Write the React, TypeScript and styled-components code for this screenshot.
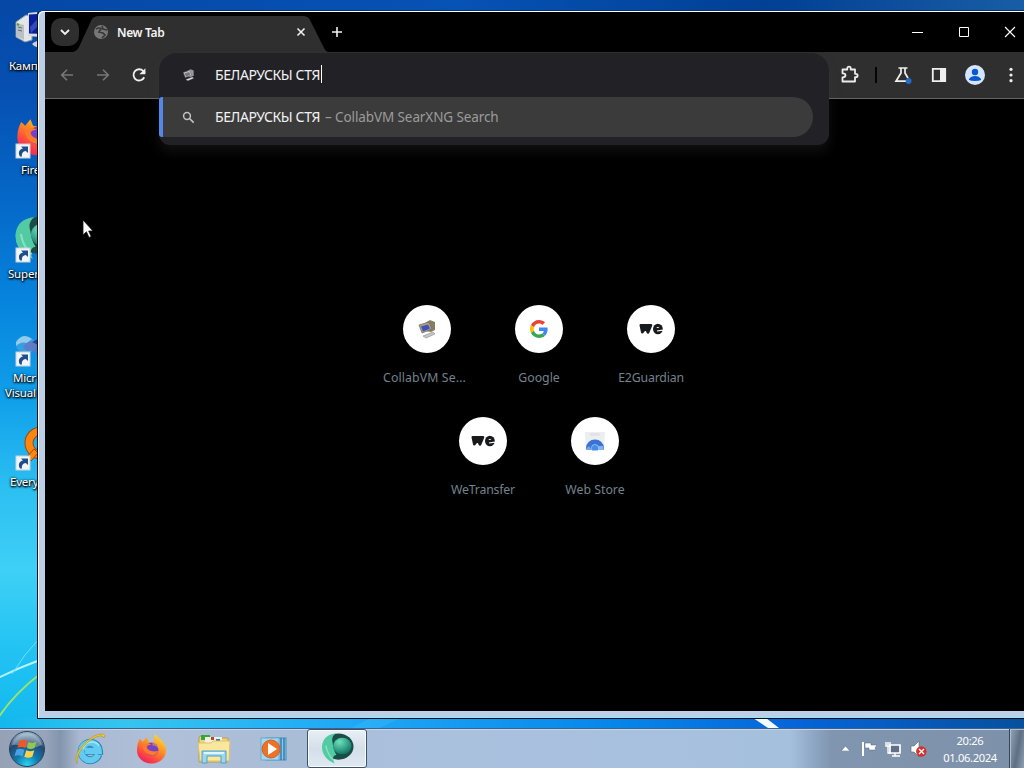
import React from "react";
import styled, { createGlobalStyle } from "styled-components";

const GlobalStyle = createGlobalStyle`
  * { box-sizing: border-box; }
  html, body { margin: 0; padding: 0; background: #000; }
  body { overflow: hidden; font-family: "Noto Sans", "Open Sans", sans-serif; }
  svg { display: block; flex: none; }
`;

const Screen = styled.div`
  position: relative;
  width: 1024px;
  height: 768px;
  overflow: hidden;
  display: flex;
  flex-direction: column;
  background: linear-gradient(180deg, #0548a6 0, #0650b2 90px, #0568c8 200px, #0684dd 300px, #10a0ea 400px, #2cc0f2 490px, #3fd0f6 570px, #22c3f3 650px, #12b8ee 728px);
`;

const Wallpaper = styled.svg`
  position: absolute;
  left: 0;
  top: 0;
`;

const DesktopIcons = styled.div`
  flex: 1;
  width: 37px;
  overflow: hidden;
  display: flex;
  flex-direction: column;
  padding-top: 9px;
`;

const Shortcut = styled.div`
  height: 104px;
  flex: none;
  position: relative;
`;

const ShortcutArt = styled.div`
  height: 49px;
  padding-left: 13px;
`;

const ShortcutLabel = styled.div<{ $left: number }>`
  padding-left: ${(p) => p.$left}px;
  white-space: pre;
  font: 11.5px/15px "Noto Sans", sans-serif;
  letter-spacing: -0.2px;
  color: #fff;
  text-shadow: 1px 1px 2px #000, 0 1px 2px #000, 0 0 3px rgba(0, 0, 0, 0.7);
`;

const WindowFrame = styled.div`
  position: absolute;
  left: 37px;
  top: 10px;
  width: 1004px;
  height: 709px;
  border: 1px solid #05101c;
  border-top-color: #06336f;
  border-radius: 6px 0 0 0;
  background: #bccfe6;
  box-shadow: inset 1px 1px 0 #fff, inset 0 -1px 0 #8ee6f8;
  padding: 1px 7px 7px 7px;
`;

const Browser = styled.div`
  width: 988px;
  height: 699px;
  background: #000;
  display: flex;
  flex-direction: column;
`;

const TabStrip = styled.div`
  height: 40px;
  flex: none;
  display: flex;
  align-items: center;
  position: relative;
  padding-left: 6px;
  padding-right: 14px;
`;

const TabSearch = styled.div`
  width: 28px;
  height: 28px;
  border-radius: 10px;
  background: #2e2e2e;
  display: flex;
  align-items: center;
  justify-content: center;
`;

const Tab = styled.div`
  width: 255px;
  height: 36px;
  margin: 4px 0 0 -6px;
  clip-path: path("M0 36 Q4 35 6 31 L18 5 Q20 0 26 0 L230 0 Q235 0 237 4 L251 32 Q253 36 255 36 Z");
  background: #2f2f2f;
  display: flex;
  align-items: center;
  padding: 0 22px 4px 20px;
`;

const TabTitle = styled.span`
  flex: 1;
  padding-left: 8px;
  color: #f4f4f4;
  font: 600 12px/18px "Noto Sans", sans-serif;
  letter-spacing: -0.35px;
  margin-top: 1px;
`;

const NewTabButton = styled.div`
  display: flex;
  margin-left: 2px;
`;

const Caption = styled.div`
  display: flex;
  gap: 34px;
  margin-left: auto;
  padding-right: 3px;
  margin-top: -1px;
`;

const Toolbar = styled.div`
  height: 47px;
  flex: none;
  display: flex;
  align-items: center;
  position: relative;
  background: #2f2f2f;
  border-bottom: 1px solid #666;
  padding-left: 13px;
  gap: 18px;
`;

const NavButtons = styled.div`
  display: flex;
  gap: 18px;
  width: 90px;
`;

const Actions = styled.div`
  display: flex;
  align-items: center;
  margin-left: auto;
  padding-right: 4px;
`;

const Slot = styled.div<{ $w: number }>`
  width: ${(p) => p.$w}px;
  display: flex;
  align-items: center;
  justify-content: center;
`;

const Divider = styled.div`
  width: 2px;
  height: 16px;
  margin-right: 2px;
  background: #050505;
`;

const Omnibox = styled.div`
  position: absolute;
  left: 114px;
  top: 1px;
  width: 670px;
  height: 92px;
  border-radius: 18px 18px 11px 11px;
  background: #212126;
  box-shadow: 0 7px 12px rgba(70, 70, 70, 0.23);
`;

const OmniRow = styled.div<{ $active?: boolean }>`
  height: ${(p) => (p.$active ? 40 : 44)}px;
  width: ${(p) => (p.$active ? 654 : 670)}px;
  display: flex;
  align-items: center;
  padding-left: ${(p) => (p.$active ? 19 : 23)}px;
  border-left: ${(p) => (p.$active ? "4px solid #5488e8" : "none")};
  background: ${(p) => (p.$active ? "#3b3b3b" : "transparent")};
  border-radius: ${(p) => (p.$active ? "3px 20px 20px 3px" : "0")};
`;

const Query = styled.span`
  margin-left: 20px;
  width: 106px;
  font: 14px/20px "Noto Sans", sans-serif;
  letter-spacing: -0.4px;
  color: #f2f2f2;
  white-space: pre;
`;

const Caret = styled.span`
  width: 1px;
  height: 18px;
  margin-bottom: 3px;
  background: #fff;
`;

const Provider = styled.span`
  margin-left: 4px;
  font: 13.5px/20px "Noto Sans", sans-serif;
  letter-spacing: -0.1px;
  color: #9b9b9b;
  white-space: pre;
`;

const Page = styled.div`
  flex: 1;
  display: flex;
  justify-content: center;
  padding-top: 190px;
`;

const Tiles = styled.div`
  width: 336px;
  display: flex;
  flex-wrap: wrap;
  justify-content: center;
  align-content: flex-start;
`;

const Tile = styled.div`
  width: 112px;
  height: 112px;
  padding-top: 16px;
  display: flex;
  flex-direction: column;
  align-items: center;
`;

const Disc = styled.div`
  width: 48px;
  height: 48px;
  border-radius: 50%;
  background: #fff;
  display: flex;
  align-items: center;
  justify-content: center;
`;

const TileLabel = styled.span<{ $ls: number; $inset?: number }>`
  margin-top: 15px;
  padding-right: ${(p) => p.$inset || 0}px;
  font: 12.3px/20px "Noto Sans", sans-serif;
  letter-spacing: ${(p) => p.$ls}px;
  color: #74828d;
  white-space: nowrap;
`;

const Cursor = styled.svg`
  position: absolute;
  left: 82px;
  top: 219px;
`;

const Taskbar = styled.div`
  position: relative;
  height: 40px;
  flex: none;
  display: flex;
  align-items: center;
  background: linear-gradient(90deg, #96a1b6 0, #97a5bb 45px, #8395ad 60px, #a9b9d1 80px, #b0c0d8 160px, #a9bdd7 300px, #aac1de 450px, #a5c0dd 790px, #8fa8c6 812px, #8095af 832px, #7e91aa 1024px);
  border-top: 1px solid #3a648f;
  box-shadow: inset 0 1px 0 #c3d6ea;
`;

const TaskSlot = styled.div<{ $w: number; $active?: boolean }>`
  width: ${(p) => p.$w}px;
  height: 39px;
  display: flex;
  align-items: center;
  justify-content: center;
  border: ${(p) => (p.$active ? "1px solid #3e526c" : "none")};
  border-radius: 3px;
  background: ${(p) => (p.$active ? "linear-gradient(180deg,#e9f0f6 0,#d3dfe9 50%,#dfe9f1 100%)" : "none")};
  box-shadow: ${(p) => (p.$active ? "inset 0 0 0 1px #f8fbfd" : "none")};
`;

const Tray = styled.div`
  margin-left: auto;
  display: flex;
  align-items: center;
  height: 39px;
`;

const Clock = styled.div`
  width: 78px;
  text-align: center;
  color: #fff;
  font: 11.2px/17px "Noto Sans", sans-serif;
  letter-spacing: -0.35px;
`;

const ShowDesktop = styled.div`
  width: 15px;
  height: 39px;
  border-left: 1px solid #35465b;
  background: linear-gradient(100deg, #98a6b5, #5d6f83 55%, #91a0b1);
  box-shadow: inset 1px 1px 0 #aebccb;
`;

const ShortcutArrow = () => (
  <g transform="translate(3 31)">
    <rect width="14" height="14" fill="#f3f6f8" stroke="#c7d2db" strokeWidth="1" />
    <path d="M4 12.5c-2.5-4-.5-7.5 3-8L5 2.5h7V9L9.8 7C7 7.5 5.5 9 6 12.5z" fill="#1e4f8c" />
  </g>
);

const ComputerArt = () => (
  <svg width="48" height="46" viewBox="0 0 48 46">
    <path d="M3 13l10-7 6 1v24l-7 2-9-5z" fill="#e3e6e4" stroke="#8e979d" />
    <path d="M3 14l8 2v15l-8-4z" fill="#b9c1c5" />
    <path d="M5 18l4 1M5 21l4 1" stroke="#626d73" />
    <path d="M4 15l2 1" stroke="#4ba32e" strokeWidth="2" />
    <path d="M15 4l28-3v28l-28-2z" fill="#d6dce3" />
    <path d="M16 5.500l27-2v22l-27-1z" fill="#0b1f9c" />
    <path d="M17 18L29 5h8L18 24z" fill="#5779db" opacity=".5" />
    <path d="M19 35q5-5 12-3v6q-8 2-12-3z" fill="#cbd5d8" />
  </svg>
);

const FoxLogo = ({ size }: { size: number }) => (
  <svg width={size} height={size} viewBox="0 0 32 32">
    <defs>
      <linearGradient id="fx" x1=".8" y1="0" x2=".2" y2="1">
        <stop offset="0" stopColor="#ffe53c" />
        <stop offset=".4" stopColor="#ff9323" />
        <stop offset=".8" stopColor="#fb3b48" />
        <stop offset="1" stopColor="#e41b68" />
      </linearGradient>
    </defs>
    <path d="M4 6l3 3 4-5 2 5 6 1q-2-5 1-9 2 4 6 6 5 5 5 11A15 13.5 0 0 1 1 18Q1 11 4 6z" fill="url(#fx)" />
    <circle cx="16.5" cy="16.5" r="6.8" fill="#7641c8" />
    <path d="M7 13q4-4 9-1-4 0-5 2.500 2 6 12 4-4 7-11 3-5-3-5-8.500z" fill="#ff7b28" />
    <path d="M17 9q8 1 7 9-2-5-7-5z" fill="#ffb52d" opacity=".5" />
  </svg>
);

const SupermiumLogo = ({ size }: { size: number }) => (
  <svg width={size} height={size} viewBox="0 0 34 34">
    <defs>
      <radialGradient id="sm" cx=".35" cy=".25" r=".75">
        <stop offset="0" stopColor="#6de2bd" />
        <stop offset="1" stopColor="#137866" />
      </radialGradient>
    </defs>
    <ellipse cx="18" cy="15" rx="15.5" ry="13.5" fill="#1b4d48" />
    <path d="M1 15Q2 3 15 1.500q-5 4-3 10 1 8 4 12-6 1-2 9Q1 27 1 15z" fill="#52cba2" />
    <ellipse cx="22" cy="14.5" rx="9.5" ry="8.5" fill="url(#sm)" />
    <path d="M5 14q2 10 8 15" fill="none" stroke="#8be0c3" strokeWidth="1.5" />
  </svg>
);

const VisualArt = () => (
  <svg width="48" height="46" viewBox="0 0 48 46">
    <ellipse cx="13" cy="24" rx="10" ry="8" fill="#4ba4e1" opacity=".7" />
    <path d="M3 21q7-10 16-3l-5 4q-6-2-11 3z" fill="#92caea" />
    <path d="M10 26q7-10 13-2l5-8v18q-5 1-9-5-4 3-9-3z" fill="#6871bd" opacity=".75" />
    <path d="M19 21l8-4v8z" fill="#3d3b96" />
    <ShortcutArrow />
  </svg>
);

const EverythingArt = () => (
  <svg width="48" height="46" viewBox="0 0 48 46">
    <circle cx="28" cy="18" r="12" fill="none" stroke="#954c14" strokeWidth="9" />
    <circle cx="28" cy="18" r="12" fill="none" stroke="#ff860e" strokeWidth="7" />
    <path d="M21 24l-8 9 5 3 7-8z" fill="#ff860e" stroke="#954c14" />
    <ShortcutArrow />
  </svg>
);

const RetroMonitor = ({ mono }: { mono?: boolean }) => (
  <svg width={mono ? 13 : 20} height={mono ? 14 : 20} viewBox="0 0 20 20">
    <path d="M8 4l5-3 5 2v8l-4 2-6-1z" fill={mono ? "#999" : "#877d63"} />
    <path d="M2 6l10-3 3 7-10 4z" fill={mono ? "#c3c3c3" : "#aaa27f"} stroke="#666" strokeWidth=".7" />
    <path d="M4 7.5l7-2 2 4-7 3z" fill={mono ? "#777" : "#4250bd"} />
    <path d="M6 17l10-4 2 2-9 4z" fill={mono ? "#ddd" : "#c5c7c9"} stroke="#777" strokeWidth=".5" />
  </svg>
);

const GoogleG = () => (
  <svg width="18" height="18" viewBox="0 0 48 48">
    <path fill="#EA4335" d="M24 9.5c3.54 0 6.71 1.22 9.21 3.6l6.85-6.85C35.9 2.38 30.47 0 24 0 14.62 0 6.51 5.38 2.56 13.22l7.98 6.19C12.43 13.72 17.74 9.5 24 9.5z" />
    <path fill="#4285F4" d="M46.98 24.55c0-1.57-.15-3.09-.38-4.55H24v9.02h12.94c-.58 2.96-2.26 5.48-4.78 7.18l7.73 6c4.51-4.18 7.09-10.36 7.09-17.65z" />
    <path fill="#FBBC05" d="M10.53 28.59A14.5 14.5 0 0 1 9.77 24c0-1.6.27-3.14.76-4.59l-7.98-6.19A24 24 0 0 0 0 24c0 3.88.92 7.54 2.56 10.78l7.97-6.19z" />
    <path fill="#34A853" d="M24 48c6.48 0 11.93-2.13 15.89-5.81l-7.73-6c-2.15 1.45-4.92 2.3-8.16 2.3-6.26 0-11.57-4.22-13.47-9.91l-7.98 6.19C6.51 42.62 14.62 48 24 48z" />
  </svg>
);

const WeMark = () => (
  <svg width="24" height="12" viewBox="0 0 24 12">
    <path d="M1.8 2.2l1.5 7L6.8 5l2.200 4.400L12 2.200z" fill="#191a1c" stroke="#191a1c" strokeWidth="2.6" strokeLinejoin="round" />
    <ellipse cx="18.900" cy="6" rx="4.900" ry="5.300" fill="#191a1c" />
    <path d="M17.400 5q1.300-2.200 3 0z" fill="#fff" />
    <path d="M18 8l6.500-1" stroke="#fff" strokeWidth="1.200" />
  </svg>
);

const StoreIcon = () => (
  <svg width="20" height="20" viewBox="0 0 20 20">
    <path d="M0 1h20l-1 17H1z" fill="#eceef0" />
    <path d="M6 3.5h8" stroke="#dfe1e4" strokeWidth="2.5" strokeLinecap="round" />
    <path d="M1 19v-2a9 8.5 0 0 1 18 0v2z" fill="#3c72d3" />
    <path d="M1 19v-1l3-3 3 4z" fill="#7aa5e9" />
    <path d="M12 15h6l1 4h-6z" fill="#82b2f2" />
    <circle cx="10" cy="17" r="3.7" fill="#a9c8f5" />
    <path d="M7 19v-2a3 3 0 0 1 6 0v2z" fill="#448aef" />
  </svg>
);

const StartOrb = () => (
  <svg width="38" height="38" viewBox="0 0 38 38">
    <defs>
      <radialGradient id="orb" cx=".5" cy=".95" r=".95">
        <stop offset="0" stopColor="#28d6f4" />
        <stop offset=".35" stopColor="#1278ae" />
        <stop offset=".7" stopColor="#24496d" />
        <stop offset="1" stopColor="#a9c4d6" />
      </radialGradient>
    </defs>
    <circle cx="19" cy="19" r="17.5" fill="url(#orb)" stroke="#28435f" />
    <path d="M4 15A15.5 15.5 0 0 1 34 15Q25 19 19 17 11 14 4 15z" fill="#fff" opacity=".3" />
    <path d="M11.5 11q4-2 8 .5L17.5 18q-4-2-8-.4z" fill="#ef5727" />
    <path d="M20.5 12q4 2 8-.2L26.5 18q-4 2-7.5 0z" fill="#91c94b" />
    <path d="M8.5 19.5q4-1.5 8 .5l-2 6.5q-4-2-8-.5z" fill="#4aa1df" />
    <path d="M18.3 20.3q4 2 8 0l-2 6.5q-4 2-8 0z" fill="#ffd14b" />
  </svg>
);

const IELogo = () => (
  <svg width="34" height="34" viewBox="0 0 34 34">
    <path d="M25.500 22.500A8.700 8.700 0 1 1 26 18.800H12" fill="none" stroke="#2387b9" strokeWidth="7.800" />
    <path d="M25.200 22.500A8.700 8.700 0 1 1 25.700 18.800H12" fill="none" stroke="#63cbef" strokeWidth="6.200" />
    <path d="M10 17q2-7 9-7 5 0 7 4" fill="none" stroke="#b4ecfb" strokeWidth="1.500" opacity=".8" />
    <path d="M4 31.500Q0 25 9 14 21 1 30 2q3 1 1 4-1-3-5-2-8 2-16 11-7 9-6 16.500z" fill="#f7cb31" stroke="#b98e1a" strokeWidth=".6" />
  </svg>
);

const ExplorerIcon = () => (
  <svg width="36" height="32" viewBox="0 0 36 32">
    <path d="M3 5q0-2 2-2h8l2 2h17v24H3z" fill="#efd580" stroke="#b79c50" />
    <path d="M5 2h9v5H5z" fill="#33a642" />
    <path d="M9 4h17v7H9z" fill="#f6f1df" />
    <path d="M15 4h3v3h-3z" fill="#c6422f" />
    <path d="M20 6h4v3h-4z" fill="#347eb9" />
    <path d="M2 10h13l2-2h17l-1 20H4z" fill="#fbe79c" stroke="#dbc170" />
    <path d="M6 30V18h24v12h-5v-7H11v7z" fill="#9cd7f0" stroke="#4f9fc9" />
    <path d="M8 20h20" stroke="#dff6ff" strokeWidth="2" />
  </svg>
);

const MediaPlayerIcon = () => (
  <svg width="30" height="28" viewBox="0 0 30 28">
    <rect x="7" y="3" width="20" height="22" fill="#8fc7e9" stroke="#428ebc" />
    <path d="M22 3v22M25 3v22" stroke="#367fae" strokeWidth="1.5" />
    <rect x="2" y="3" width="18" height="22" fill="#a7d7f0" stroke="#69abd0" />
    <circle cx="12" cy="14" r="9" fill="#ee7126" stroke="#c6642e" />
    <path d="M9 8v12l9-6z" fill="#fff" />
  </svg>
);

const tiles = [
  { name: "CollabVM Se...", art: <RetroMonitor />, ls: 0.12, inset: 5 },
  { name: "Google", art: <GoogleG />, ls: 0 },
  { name: "E2Guardian", art: <WeMark />, ls: -0.17 },
  { name: "WeTransfer", art: <WeMark />, ls: -0.2 },
  { name: "Web Store", art: <StoreIcon />, ls: 0 },
];

const Shortcuts = () => (
  <DesktopIcons>
    <Shortcut>
      <ShortcutArt><ComputerArt /></ShortcutArt>
      <ShortcutLabel $left={9}>Камп</ShortcutLabel>
    </Shortcut>
    <Shortcut>
      <ShortcutArt>
        <svg width="48" height="46" viewBox="0 0 48 46"><g transform="translate(3 1)"><FoxLogo size={42} /></g><ShortcutArrow /></svg>
      </ShortcutArt>
      <ShortcutLabel $left={21}>Fire</ShortcutLabel>
    </Shortcut>
    <Shortcut>
      <ShortcutArt>
        <svg width="48" height="46" viewBox="0 0 48 46"><g transform="translate(1 -2)"><SupermiumLogo size={46} /></g><ShortcutArrow /></svg>
      </ShortcutArt>
      <ShortcutLabel $left={8}>Super</ShortcutLabel>
    </Shortcut>
    <Shortcut>
      <ShortcutArt><VisualArt /></ShortcutArt>
      <ShortcutLabel $left={13}>Micr</ShortcutLabel>
      <ShortcutLabel $left={5}>Visual</ShortcutLabel>
    </Shortcut>
    <Shortcut>
      <ShortcutArt><EverythingArt /></ShortcutArt>
      <ShortcutLabel $left={10}>Every</ShortcutLabel>
    </Shortcut>
  </DesktopIcons>
);

const BrowserTabs = () => (
  <TabStrip>
    <TabSearch>
      <svg width="12" height="12" viewBox="0 0 12 12"><path d="M2 4l4 4 4-4" fill="none" stroke="#f2f2f2" strokeWidth="1.8" /></svg>
    </TabSearch>
    <Tab>
      <svg width="16" height="16" viewBox="0 0 16 16">
        <circle cx="8" cy="8" r="7" fill="#777" />
        <path d="M3 5q4-2 5 0l-2 3 4 1 2 2-3 3M9 2l1 3 4 1" fill="none" stroke="#383838" strokeWidth="1.7" />
      </svg>
      <TabTitle>New Tab</TabTitle>
      <svg width="10" height="10" viewBox="0 0 10 10"><path d="M1.5 1.5l7 7m0-7l-7 7" stroke="#eee" strokeWidth="1.6" /></svg>
    </Tab>
    <NewTabButton>
      <svg width="14" height="14" viewBox="0 0 14 14"><path d="M7 2v10M2 7h10" stroke="#eee" strokeWidth="1.6" /></svg>
    </NewTabButton>
    <Caption>
      <svg width="12" height="12" viewBox="0 0 12 12"><path d="M0 6.5h11" stroke="#fff" /></svg>
      <svg width="12" height="12" viewBox="0 0 12 12"><path d="M1.5 1.5h9v9h-9z" fill="none" stroke="#fff" /></svg>
      <svg width="12" height="12" viewBox="0 0 12 12"><path d="M1 1l10 10m0-10L1 11" stroke="#fff" strokeWidth="1.1" /></svg>
    </Caption>
  </TabStrip>
);

const BrowserToolbar = () => (
  <Toolbar>
    <NavButtons>
      <svg width="18" height="18" viewBox="0 0 24 24"><path d="M20 12H5m7-7l-7 7 7 7" fill="none" stroke="#777" strokeWidth="2.2" /></svg>
      <svg width="18" height="18" viewBox="0 0 24 24"><path d="M4 12h15m-7-7l7 7-7 7" fill="none" stroke="#777" strokeWidth="2.2" /></svg>
      <svg width="18" height="18" viewBox="0 0 24 24"><path d="M19 15A7.5 7.5 0 1 1 17.5 6.5L20 9" fill="none" stroke="#efefef" strokeWidth="2.4" /><path d="M20.5 3v8h-8z" fill="#efefef" /></svg>
    </NavButtons>
    <Actions>
      <Slot $w={36}>
        <svg width="20" height="20" viewBox="0 0 20 20"><path d="M2.5 4.5h4.8V3.3a1.7 1.7 0 0 1 3.4 0v1.2H15v4.3h.9a1.7 1.7 0 0 1 0 3.4H15v4.3H2.5v-4.2q3 0 3-2t-3-2z" fill="none" stroke="#ededed" strokeWidth="1.8" strokeLinejoin="round" /></svg>
      </Slot>
      <Slot $w={17}><Divider /></Slot>
      <Slot $w={36}>
        <svg width="20" height="20" viewBox="0 0 20 20"><path d="M5.5 3h9M8 3v5L3 16.2h11M12 3v5l3 5" fill="none" stroke="#efefef" strokeWidth="1.7" /><circle cx="15.6" cy="16" r="2.9" fill="#246bce" /></svg>
      </Slot>
      <Slot $w={36}>
        <svg width="16" height="16" viewBox="0 0 16 16"><path d="M1.8 1.8h12.4v12.4H1.8z" fill="none" stroke="#efefef" strokeWidth="1.8" /><path d="M9 2h5v12H9z" fill="#efefef" /></svg>
      </Slot>
      <Slot $w={36}>
        <svg width="20" height="20" viewBox="0 0 20 20"><circle cx="10" cy="10" r="10" fill="#d5e5fd" /><circle cx="10" cy="7" r="3.2" fill="#0b57d0" /><path d="M4 15v-1q2-3 6-3t6 3v1q-2 1-6 1t-6-1z" fill="#0b57d0" /></svg>
      </Slot>
      <Slot $w={36}>
        <svg width="4" height="16" viewBox="0 0 4 16"><circle cx="2" cy="2.3" r="1.6" fill="#eee" /><circle cx="2" cy="8" r="1.6" fill="#eee" /><circle cx="2" cy="13.7" r="1.6" fill="#eee" /></svg>
      </Slot>
    </Actions>
    <Omnibox>
      <OmniRow>
        <RetroMonitor mono />
        <Query>БЕЛАРУСКЫ СТЯ</Query>
        <Caret />
      </OmniRow>
      <OmniRow $active>
        <svg width="13" height="13" viewBox="0 0 13 13"><circle cx="5" cy="5" r="3.4" fill="none" stroke="#c2c2c2" strokeWidth="1.5" /><path d="M7.5 7.5l4.2 4.2" stroke="#c2c2c2" strokeWidth="1.7" /></svg>
        <Query>БЕЛАРУСКЫ СТЯ</Query>
        <Provider>– CollabVM SearXNG Search</Provider>
      </OmniRow>
    </Omnibox>
  </Toolbar>
);

const DesktopTaskbar = () => (
  <Taskbar>
    <TaskSlot $w={54}><StartOrb /></TaskSlot>
    <TaskSlot $w={71}><IELogo /></TaskSlot>
    <TaskSlot $w={52}><FoxLogo size={31} /></TaskSlot>
    <TaskSlot $w={73}><ExplorerIcon /></TaskSlot>
    <TaskSlot $w={47}><MediaPlayerIcon /></TaskSlot>
    <TaskSlot $w={10} />
    <TaskSlot $w={60} $active><SupermiumLogo size={33} /></TaskSlot>
    <Tray>
      <Slot $w={24}><svg width="9" height="5" viewBox="0 0 9 5"><path d="M0 5l4.5-5L9 5z" fill="#fff" stroke="#53647a" strokeWidth=".5" /></svg></Slot>
      <Slot $w={24}><svg width="18" height="18" viewBox="0 0 18 18"><path d="M3 2v14" stroke="#fff" strokeWidth="2" /><path d="M5 3h6v2h6l-2 3 1 2H9V8H5z" fill="#fff" stroke="#52647c" strokeWidth=".5" /></svg></Slot>
      <Slot $w={24}><svg width="18" height="18" viewBox="0 0 18 18"><path d="M6 5h10v8H6z" fill="#607187" stroke="#fff" strokeWidth="1.7" /><path d="M8 16h8M11 13v3M2 2v4h4V2M4 6v7h3M4 2v3" fill="none" stroke="#fff" strokeWidth="1.4" /></svg></Slot>
      <Slot $w={26}><svg width="19" height="18" viewBox="0 0 19 18"><path d="M2 6h3l5-5v16l-5-5H2z" fill="#fff" stroke="#536378" strokeWidth=".6" /><circle cx="12.3" cy="11.5" r="5.2" fill="#d5302c" /><path d="M10 9l5 5m0-5l-5 5" stroke="#fff" strokeWidth="1.4" /></svg></Slot>
      <Clock>
        <div>20:26</div>
        <div>01.06.2024</div>
      </Clock>
      <ShowDesktop />
    </Tray>
  </Taskbar>
);

export default function App() {
  return (
    <>
      <GlobalStyle />
      <Screen>
        <Wallpaper width="1024" height="728" viewBox="0 0 1024 728">
          <defs>
            <linearGradient id="topEdge"><stop offset="0" stopColor="#0548a6" /><stop offset=".45" stopColor="#0752b5" /><stop offset=".75" stopColor="#004095" /><stop offset="1" stopColor="#195da5" /></linearGradient>
            <linearGradient id="bottomEdge"><stop offset="0" stopColor="#12b8ee" /><stop offset=".12" stopColor="#36c4ef" /><stop offset=".33" stopColor="#20aaf6" /><stop offset=".6" stopColor="#0786ea" /><stop offset=".78" stopColor="#0664d8" /><stop offset="1" stopColor="#07509e" /></linearGradient>
          </defs>
          <rect width="1024" height="13" fill="url(#topEdge)" />
          <rect y="717" width="1024" height="11" fill="url(#bottomEdge)" />
          <path d="M-2 678Q18 668 40 660" fill="none" stroke="#b6f2ff" strokeWidth="2" />
          <path d="M12 674Q24 654 40 638" fill="none" stroke="#72ddfa" />
          <path d="M-2 718Q14 694 40 674" fill="none" stroke="#9ce46b" strokeWidth="1.8" />
          <path d="M753 718h13l13 10h-11z" fill="#f4fbff" />
          <path d="M351 728l20-10h30l-22 10z" fill="#77ddff" opacity=".15" />
        </Wallpaper>
        <Shortcuts />
        <DesktopTaskbar />
        <WindowFrame>
          <Browser>
            <BrowserTabs />
            <BrowserToolbar />
            <Page>
              <Tiles>
                {tiles.map((t) => (
                  <Tile key={t.name}>
                    <Disc>{t.art}</Disc>
                    <TileLabel $ls={t.ls} $inset={t.inset}>{t.name}</TileLabel>
                  </Tile>
                ))}
              </Tiles>
            </Page>
          </Browser>
        </WindowFrame>
        <Cursor width="12" height="20" viewBox="0 0 12 20">
          <path d="M1 1v15l3.4-3.2L7 18.5l2.2-1-2.5-5.5H11z" fill="#fff" stroke="#111" strokeWidth=".8" />
        </Cursor>
      </Screen>
    </>
  );
}
